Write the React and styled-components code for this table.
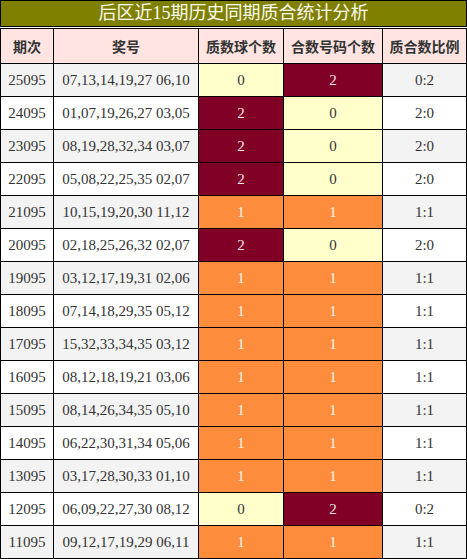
import styled, { createGlobalStyle } from "styled-components";

const rows = [
    ["25095", "07,13,14,19,27 06,10", 0, 2],
    ["24095", "01,07,19,26,27 03,05", 2, 0],
    ["23095", "08,19,28,32,34 03,07", 2, 0],
    ["22095", "05,08,22,25,35 02,07", 2, 0],
    ["21095", "10,15,19,20,30 11,12", 1, 1],
    ["20095", "02,18,25,26,32 02,07", 2, 0],
    ["19095", "03,12,17,19,31 02,06", 1, 1],
    ["18095", "07,14,18,29,35 05,12", 1, 1],
    ["17095", "15,32,33,34,35 03,12", 1, 1],
    ["16095", "08,12,18,19,21 03,06", 1, 1],
    ["15095", "08,14,26,34,35 05,10", 1, 1],
    ["14095", "06,22,30,31,34 05,06", 1, 1],
    ["13095", "03,17,28,30,33 01,10", 1, 1],
    ["12095", "06,09,22,27,30 08,12", 0, 2],
    ["11095", "09,12,17,19,29 06,11", 1, 1],
];

const heads = ["期次", "奖号", "质数球个数", "合数号码个数", "质合数比例"];
const widths = [53, 145, 85, 99, 84];

const levels = {
    0: { bg: "#FFFFCC", fg: "#333333" },
    1: { bg: "#FD8D3C", fg: "#FFF3E8" },
    2: { bg: "#800026", fg: "#F4E6EA" },
};

function App() {
    return (
        <>
            <GlobalStyle />
            <Wrap>
                <Title>后区近15期历史同期质合统计分析</Title>
                <Table>
                    <colgroup>
                        {widths.map((w, i) => <col key={i} style={{ width: w }} />)}
                    </colgroup>
                    <thead>
                        <tr>
                            {heads.map((h) => <Th key={h}>{h}</Th>)}
                        </tr>
                    </thead>
                    <tbody>
                        {rows.map(([issue, nums, p, c], i) => (
                            <Row key={issue} $odd={i % 2 === 0}>
                                <Td>{issue}</Td>
                                <Td>{nums}</Td>
                                <Level $v={p}>{p}</Level>
                                <Level $v={c}>{c}</Level>
                                <Td>{p}:{c}</Td>
                            </Row>
                        ))}
                    </tbody>
                </Table>
            </Wrap>
        </>
    );
}

const GlobalStyle = createGlobalStyle`
    body {
        margin: 0;
        background: #FFFFFF;
        font-family: "Liberation Serif", "Noto Sans CJK SC", serif;
    }
`;

const Wrap = styled.div`
    width: 467px;
`;

const Title = styled.div`
    height: 25px;
    border: 1px solid #000;
    margin-bottom: 1px;
    background-color: #808000;
    color: #FAFAF0;
    font-size: 18px;
    line-height: 25px;
    text-align: center;
`;

const Table = styled.table`
    width: 467px;
    border-collapse: collapse;
    table-layout: fixed;
`;

const Th = styled.th`
    height: 34px;
    padding: 0;
    border: 1px solid #000;
    background-color: #FFE4E1;
    color: #333333;
    font-family: "Noto Sans CJK SC", sans-serif;
    font-size: 14px;
    font-weight: bold;
    text-align: center;
`;

const Row = styled.tr`
    background-color: ${(p) => (p.$odd ? "#F3F3F3" : "#FFFFFF")};
`;

const Td = styled.td`
    height: 32px;
    padding: 0;
    border: 1px solid #000;
    color: #333333;
    font-size: 15px;
    text-align: center;
    white-space: nowrap;
`;

const Level = styled(Td)`
    background-color: ${(p) => levels[p.$v].bg};
    color: ${(p) => levels[p.$v].fg};
`;

export default App;
